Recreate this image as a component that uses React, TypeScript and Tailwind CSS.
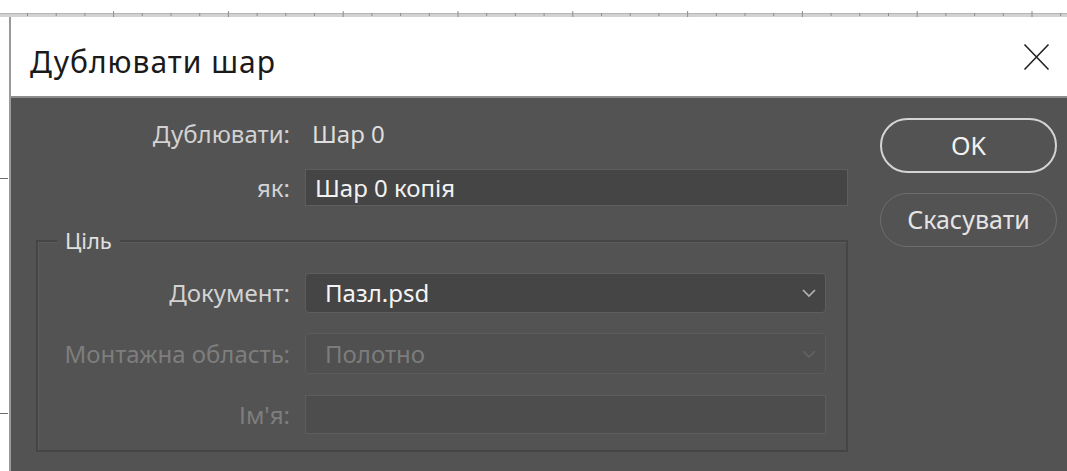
const ui = { fontFamily: '"Noto Sans", "Open Sans", sans-serif' };

function Chevron({ dim }: { dim?: boolean }) {
  return (
    <svg width="16" height="10" viewBox="0 0 16 10" className="shrink-0">
      <path d="M2 2 L8 8 L14 2" fill="none" stroke={dim ? '#636363' : '#b4b4b4'} strokeWidth="1.6" />
    </svg>
  );
}

function TopRuler() {
  const ticks = Array.from({ length: 38 }, (_, i) => 27 + i * 28.7);
  return (
    <svg width="1067" height="17" className="block">
      <rect x="0" y="13" width="1067" height="4" fill="#d2d2d2" />
      <rect x="0" y="13" width="1067" height="1" fill="#b5b5b5" />
      {ticks.map((x, i) => (
        <rect key={i} x={x} y={i % 4 === 3 ? 11 : 13} width="1" height={i % 4 === 3 ? 6 : 3} fill="#8e8e8e" />
      ))}
    </svg>
  );
}

export default function App() {
  return (
    <div className="w-[1067px] h-[471px] bg-white overflow-hidden" style={ui}>
      <TopRuler />
      <div className="flex h-[454px]">
        {/* left ruler strip */}
        <div className="w-[9px] bg-white relative">
          <div className="absolute left-0 top-[161px] w-[8px] h-px bg-[#6a6a6a]" />
          <div className="absolute left-0 top-[396px] w-[8px] h-px bg-[#6a6a6a]" />
        </div>

        <div className="flex-1 flex flex-col border-l-2 border-[#9a9a9a]">
          {/* title bar */}
          <div className="h-[79px] bg-white flex items-center justify-between pl-[19px] pr-[17px] shrink-0">
            <span className="text-[30px] text-[#1a1a1a] tracking-[1px] mt-[10px]">
              Дублювати шар
            </span>
            <svg width="27" height="28" viewBox="0 0 27 28">
              <path d="M1.5 1.5 L25.5 26.5 M25.5 1.5 L1.5 26.5" stroke="#222" strokeWidth="1.6" />
            </svg>
          </div>
          <div className="h-[2px] bg-[#8d8d8d] shrink-0" />

          {/* body */}
          <div className="flex-1 bg-[#535353] flex text-[24px]">
            <div className="w-[837px] flex flex-col">
              <div className="flex items-center h-[30px] mt-[21px]">
                <div className="w-[279px] text-right text-[#d2d2d2]">Дублювати:</div>
                <div className="ml-[22px] text-[#dedede]">Шар 0</div>
              </div>

              <div className="flex items-center mt-[20px]">
                <div className="w-[279px] text-right text-[#d2d2d2]">як:</div>
                <div className="ml-[15px] w-[543px] h-[37px] bg-[#454545] border border-[#5e5e5e] flex items-center px-[9px] text-[#f2f2f2]">
                  Шар 0 копія
                </div>
              </div>

              {/* target group */}
              <div className="relative ml-[25px] w-[812px] mt-[34px] h-[212px] border-2 border-[#454545] shadow-[inset_1px_1px_0_#5c5c5c]">
                <div className="absolute -top-[18px] left-[19px] px-[8px] bg-[#535353] text-[#e0e0e0] text-[22px]">Ціль</div>

                <div className="flex items-center mt-[31px]">
                  <div className="w-[252px] text-right text-[#d2d2d2]">Документ:</div>
                  <div className="ml-[15px] w-[521px] h-[40px] rounded-[4px] bg-[#454545] border border-[#5e5e5e] flex items-center justify-between pl-[19px] pr-[8px] text-[#f5f5f5]">
                    <span>Пазл.psd</span>
                    <Chevron />
                  </div>
                </div>

                <div className="flex items-center mt-[20px]">
                  <div className="w-[252px] text-right text-[#7e7e7e]">Монтажна область:</div>
                  <div className="ml-[15px] w-[521px] h-[41px] rounded-[4px] bg-[#505050] border border-[#5c5c5c] flex items-center justify-between pl-[19px] pr-[8px] text-[#7c7c7c]">
                    <span>Полотно</span>
                    <Chevron dim />
                  </div>
                </div>

                <div className="flex items-center mt-[21px]">
                  <div className="w-[252px] text-right text-[#7e7e7e]">Ім'я:</div>
                  <div className="ml-[15px] w-[521px] h-[39px] bg-[#4d4d4d] border border-[#5d5d5d]" />
                </div>
              </div>
            </div>

            {/* buttons */}
            <div className="ml-[32px] mt-[20px] flex flex-col gap-[20px]">
              <button className="w-[177px] h-[55px] rounded-full border-2 border-[#d4d4d4] text-[#f2f2f2] text-[25px]">
                OK
              </button>
              <button className="w-[177px] h-[54px] rounded-full border border-[#6e6e6e] text-[#e4e4e4] text-[25px]">
                Скасувати
              </button>
            </div>
          </div>
        </div>
      </div>
    </div>
  );
}
